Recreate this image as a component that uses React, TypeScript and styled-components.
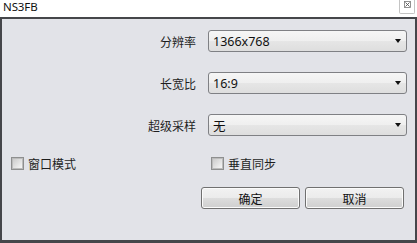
import React from "react";
import styled, { createGlobalStyle } from "styled-components";

const Global = createGlobalStyle`
  html, body { margin: 0; padding: 0; background: #ffffff; }
  body { width: 417px; height: 243px; overflow: hidden; }
  * { box-sizing: border-box; }
`;

const Window = styled.div`
  width: 417px;
  height: 243px;
  display: flex;
  flex-direction: column;
  font-family: "Noto Sans", "Noto Sans CJK SC", sans-serif;
  color: #1a1a1a;
`;

const TitleBar = styled.div`
  height: 17px;
  flex: 0 0 17px;
  background: #ffffff;
  display: flex;
  align-items: flex-start;
  justify-content: space-between;
  padding-left: 3px;
  padding-right: 2px;
`;

const Title = styled.div`
  font-family: "Noto Sans", sans-serif;
  font-size: 11.5px;
  line-height: 13px;
  color: #111;
  letter-spacing: -0.1px;
`;

const CloseBox = styled.div`
  width: 16px;
  height: 15px;
  margin-top: -1px;
  border: 1px solid #c4c4c4;
  border-top: none;
  border-radius: 0 0 2px 2px;
  display: flex;
  justify-content: center;
  padding-top: 2px;
  background: #fff;
`;

const Body = styled.div`
  flex: 1;
  background: #e2e3e8;
  border-top: 2px solid #45464a;
  border-left: 2px solid #45464a;
  border-right: 2px solid #45464a;
  border-bottom: 3px solid #45464a;
  display: flex;
  flex-direction: column;
  padding-top: 11px;
`;

const Form = styled.div`
  display: grid;
  grid-template-columns: 194px 199px;
  column-gap: 12px;
  row-gap: 20px;
  align-items: center;
`;

const Label = styled.div`
  font-family: "Noto Sans CJK SC", sans-serif;
  font-size: 12px;
  text-align: right;
  color: #1e1e1e;
`;

const Select = styled.div`
  height: 22px;
  border: 1px solid #7f8084;
  border-radius: 3px;
  background: linear-gradient(#f6f6f6, #efefef 50%, #e6e6e6 50%, #dedede);
  display: flex;
  align-items: center;
  justify-content: space-between;
  padding-left: 4px;
  padding-right: 4px;
  font-family: "Noto Sans", "Noto Sans CJK SC", sans-serif;
  font-size: 12.5px;
  color: #111;
`;

const Arrow = styled.span`
  width: 0;
  height: 0;
  border-left: 3.5px solid transparent;
  border-right: 3.5px solid transparent;
  border-top: 4px solid #111;
  margin-right: 1px;
`;

const CheckRow = styled.div`
  display: grid;
  grid-template-columns: 200px 1fr;
  padding-left: 9px;
  margin-top: 19px;
  height: 16px;
  align-items: center;
`;

const CheckItem = styled.label`
  display: flex;
  align-items: center;
  gap: 4px;
  font-family: "Noto Sans CJK SC", sans-serif;
  font-size: 12px;
  color: #1e1e1e;
`;

const CheckBox = styled.span`
  width: 13px;
  height: 13px;
  border: 1px solid #8e8f8f;
  background: #f4f4f4;
  display: flex;
  align-items: center;
  justify-content: center;
  &::after {
    content: "";
    width: 9px;
    height: 9px;
    border: 1px solid #bcbcbc;
    background: linear-gradient(135deg, #cbcbcb, #f6f6f6);
  }
`;

const ButtonRow = styled.div`
  display: flex;
  justify-content: flex-end;
  gap: 5px;
  padding-right: 11px;
  margin-top: 16px;
`;

const Button = styled.div`
  width: 99px;
  height: 22px;
  border: 1px solid #707070;
  border-radius: 3px;
  background: linear-gradient(#f2f2f2, #ebebeb 50%, #dddddd 50%, #cfcfcf);
  box-shadow: inset 0 0 0 1px #fbfbfb;
  display: flex;
  align-items: center;
  justify-content: center;
  font-family: "Noto Sans CJK SC", sans-serif;
  font-size: 12px;
  color: #111;
`;

const rows = [
  { label: "分辨率", value: "1366x768" },
  { label: "长宽比", value: "16:9" },
  { label: "超级采样", value: "无" },
];

export default function App() {
  return (
    <Window>
      <Global />
      <TitleBar>
        <Title>NS3FB</Title>
        <CloseBox>
          <svg width="7" height="7" viewBox="0 0 7 7">
            <rect x="0.5" y="0.5" width="6" height="6" fill="none" stroke="#777" strokeWidth="0.8" />
            <path d="M1.5 1.5 L5.5 5.5 M5.5 1.5 L1.5 5.5" stroke="#555" strokeWidth="0.9" />
          </svg>
        </CloseBox>
      </TitleBar>
      <Body>
        <Form>
          {rows.map((r) => (
            <React.Fragment key={r.label}>
              <Label>{r.label}</Label>
              <Select>
                <span>{r.value}</span>
                <Arrow />
              </Select>
            </React.Fragment>
          ))}
        </Form>
        <CheckRow>
          <CheckItem>
            <CheckBox />
            窗口模式
          </CheckItem>
          <CheckItem>
            <CheckBox />
            垂直同步
          </CheckItem>
        </CheckRow>
        <ButtonRow>
          <Button>确定</Button>
          <Button>取消</Button>
        </ButtonRow>
      </Body>
    </Window>
  );
}
